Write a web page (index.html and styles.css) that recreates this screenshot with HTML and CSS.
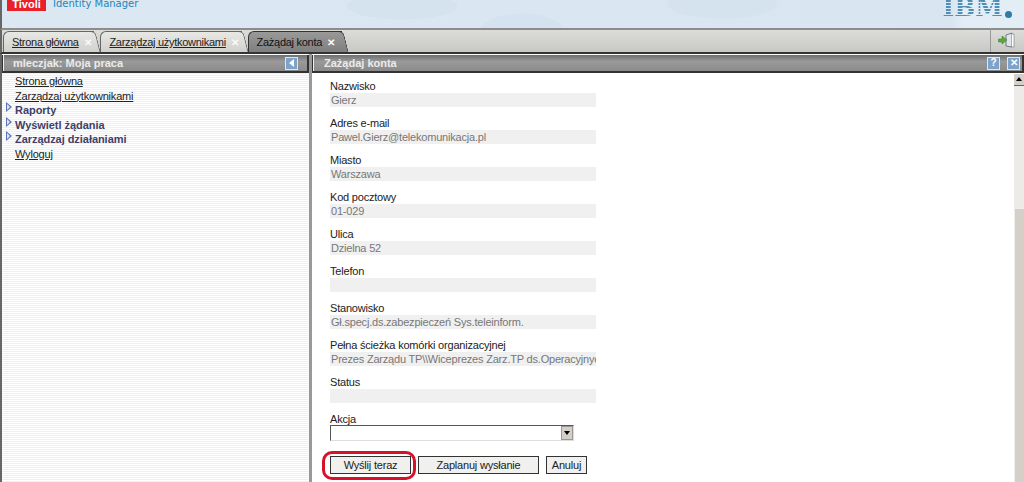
FILE: index.html
```html
<!DOCTYPE html>
<html lang="pl">
<head>
    <meta charset="UTF-8">
    <title>Tivoli Identity Manager</title>
    <link rel="stylesheet" href="styles.css">
</head>
<body>
    <div class="banner">
        <div class="brand">
            <span class="tivoli">Tivoli</span>
            <span class="product">Identity Manager</span>
        </div>
        <div class="ibm">IBM<span class="ibm-dot"></span></div>
    </div>

    <div class="tabbar">
        <div class="tab"><span class="tab-link">Strona główna</span><span class="tab-x">✕</span></div>
        <div class="tab"><span class="tab-link">Zarządzaj użytkownikami</span><span class="tab-x">✕</span></div>
        <div class="tab active"><span>Zażądaj konta</span><span class="tab-x">✕</span></div>
        <div class="logout-box">
            <svg width="17" height="17" viewBox="0 0 17 17">
                <path d="M8 3 L14 1 V15 L8 14 Z" fill="#dfe5ea" stroke="#56646c" stroke-width="0.8"/>
                <path d="M14 2 H16 V15 H14" fill="#fff" stroke="#8a949a" stroke-width="0.8"/>
                <path d="M0.5 7 H4 V4 L9 8 L4 12 V10 H0.5 Z" fill="#5aa83c" stroke="#3c7a28" stroke-width="0.5"/>
            </svg>
        </div>
    </div>

    <div class="workspace">
        <aside class="sidebar">
            <div class="panel-head">
                <span>mleczjak: Moja praca</span>
                <span class="head-btn">
                    <svg width="10" height="10" viewBox="0 0 10 10"><path d="M7 1 V9 L2 5 Z" fill="#fff"/></svg>
                </span>
            </div>
            <ul class="nav">
                <li><a class="nav-link">Strona główna</a></li>
                <li><a class="nav-link">Zarządzaj użytkownikami</a></li>
                <li class="group">Raporty</li>
                <li class="group">Wyświetl żądania</li>
                <li class="group">Zarządzaj działaniami</li>
                <li><a class="nav-link">Wyloguj</a></li>
            </ul>
        </aside>

        <main class="main">
            <div class="panel-head main-head">
                <span>Zażądaj konta</span>
                <span class="head-btns">
                    <span class="head-btn">?</span>
                    <span class="head-btn">✕</span>
                </span>
            </div>
            <div class="main-body">
                <div class="form">
                    <div class="field"><label>Nazwisko</label><div class="value">Gierz</div></div>
                    <div class="field"><label>Adres e-mail</label><div class="value">Pawel.Gierz@telekomunikacja.pl</div></div>
                    <div class="field"><label>Miasto</label><div class="value">Warszawa</div></div>
                    <div class="field"><label>Kod pocztowy</label><div class="value">01-029</div></div>
                    <div class="field"><label>Ulica</label><div class="value">Dzielna 52</div></div>
                    <div class="field"><label>Telefon</label><div class="value"></div></div>
                    <div class="field"><label>Stanowisko</label><div class="value">Gł.specj.ds.zabezpieczeń Sys.teleinform.</div></div>
                    <div class="field"><label>Pełna ścieżka komórki organizacyjnej</label><div class="value">Prezes Zarządu TP\\Wiceprezes Zarz.TP ds.Operacyjnych</div></div>
                    <div class="field"><label>Status</label><div class="value"></div></div>
                    <div class="field action">
                        <label>Akcja</label>
                        <div class="select"><span class="select-arrow"></span></div>
                    </div>
                    <div class="buttons">
                        <button class="btn send">Wyślij teraz</button>
                        <button class="btn plan">Zaplanuj wysłanie</button>
                        <button class="btn cancel">Anuluj</button>
                    </div>
                </div>
                <div class="scrollbar">
                    <div class="scroll-up"></div>
                    <div class="scroll-track"></div>
                    <div class="scroll-thumb"></div>
                </div>
            </div>
        </main>
    </div>
</body>
</html>
```

FILE: styles.css
```css
* {
    margin: 0;
    padding: 0;
    box-sizing: border-box;
}
html, body {
    height: 482px;
    overflow: hidden;
}
body {
    display: flex;
    flex-direction: column;
    background: #fff;
    color: #222;
    font-family: "Liberation Sans", Arial, sans-serif;
    font-size: 11px;
    letter-spacing: -0.2px;
}

/* top banner, cut off by the screenshot */
.banner {
    height: 30px;
    flex: none;
    display: flex;
    justify-content: space-between;
    overflow: hidden;
    background:
        radial-gradient(ellipse 90px 22px at 400px 6px, #d5e3ef 60%, transparent 62%),
        radial-gradient(ellipse 70px 30px at 520px 32px, #d4e3ef 60%, transparent 62%),
        radial-gradient(ellipse 90px 24px at 720px 4px, #d5e3ef 60%, transparent 62%),
        linear-gradient(90deg, #dbe7f1, #d9e6f1 93%, #e2edf5 94%);
    border-left: 2px solid #666;
    border-bottom: 2px solid #8c8c8c;
}
.brand {
    display: flex;
    align-items: flex-start;
    gap: 7px;
    padding-left: 5px;
    letter-spacing: 0;
}
.tivoli {
    width: 39px;
    height: 11px;
    background: #e8202a;
    color: #fff;
    font-weight: bold;
    font-size: 11px;
    line-height: 8px;
    text-align: center;
}
.product {
    color: #1f86b8;
    font-family: "DejaVu Sans", sans-serif;
    font-size: 10px;
    line-height: 8px;
    letter-spacing: 0;
}
.ibm {
    display: flex;
    align-items: flex-start;
    height: 27px;
    margin: -6px 12px 0 0;
    font-family: "DejaVu Serif", serif;
    font-size: 25px;
    line-height: 27px;
    font-weight: bold;
    letter-spacing: 0;
    color: transparent;
    background: repeating-linear-gradient(#4d8fb5 0 2px, transparent 2px 3px);
    -webkit-background-clip: text;
    background-clip: text;
}
.ibm-dot {
    width: 7px;
    height: 7px;
    margin: 17px 0 0 2px;
    border-radius: 50%;
    background: #2f7ba8;
}

/* tabs */
.tabbar {
    height: 24px;
    flex: none;
    display: flex;
    align-items: flex-end;
    gap: 6px;
    padding-left: 1px;
    background: linear-gradient(#dcdcd8, #c8c8c4);
    border-left: 2px solid #666;
    border-bottom: 2px solid #333;
}
.tab {
    position: relative;
    height: 21px;
    display: flex;
    align-items: center;
    gap: 5px;
    padding: 0 3px 0 8px;
    background: linear-gradient(#e8e8e4, #d0d0cc);
    border: 1px solid #666;
    border-width: 1px 0 0 1px;
    border-radius: 6px 0 0 0;
    font-size: 11px;
    letter-spacing: -0.28px;
    color: #222;
}
/* slanted right side of a tab */
.tab::after {
    content: "";
    position: absolute;
    top: -1px;
    bottom: 0;
    right: -4px;
    width: 8px;
    background: inherit;
    border: 1px solid #666;
    border-width: 1px 1px 0 0;
    border-radius: 0 5px 0 0;
    transform: skewX(14deg);
}
.tab-link {
    text-decoration: underline;
}
.tab-x {
    position: relative;
    z-index: 1;
    color: #fafafa;
    font-size: 10px;
    font-weight: bold;
}
.tab.active {
    padding-right: 7px;
    background: linear-gradient(#999, #7f7f7f);
    border-color: #333;
    color: #111;
}
.tab.active::after {
    border-color: #333;
}
.logout-box {
    height: 24px;
    margin-left: auto;
    width: 34px;
    display: flex;
    align-items: center;
    padding-left: 7px;
    border-left: 1px solid #999;
}

/* two panels */
.workspace {
    flex: 1;
    display: flex;
    min-height: 0;
}
.sidebar {
    width: 309px;
    flex: none;
    border-left: 2px solid #666;
    background: repeating-linear-gradient(#fff 0 1px, #eef1f1 1px 2px);
}
.panel-head {
    height: 18px;
    margin-top: 1px;
    display: flex;
    align-items: center;
    justify-content: space-between;
    padding: 0 9px 0 10px;
    background: linear-gradient(#6e6e6e, #9a9a9a 40%, #8a8a8a);
    border: 1px solid #333;
    border-width: 0 2px 2px 1px;
    box-shadow: inset 1px 0 #eee;
    color: #ebebeb;
    font-size: 11px;
    font-weight: bold;
    letter-spacing: 0;
}
.head-btn {
    width: 13px;
    height: 13px;
    display: flex;
    align-items: center;
    justify-content: center;
    background: #7ea3cb;
    border: 1px solid #dce6f0;
    color: #fff;
    font-size: 10px;
    font-weight: bold;
    line-height: 1;
}
.head-btns {
    display: flex;
    gap: 7px;
    margin-right: -7px;
}
.nav {
    list-style: none;
    padding: 1px 0 0 13px;
}
.nav li {
    height: 14.6px;
    line-height: 14px;
    font-size: 11px;
    white-space: nowrap;
}
.nav-link {
    color: #222;
    text-decoration: underline;
}
.nav .group {
    position: relative;
    color: #3f3f68;
    font-weight: bold;
    letter-spacing: -0.05px;
}
/* small outlined arrow in front of a group */
.nav .group::before,
.nav .group::after {
    content: "";
    position: absolute;
    top: -1px;
    left: -9px;
    border-left: 6px solid #5a74b8;
    border-top: 5px solid transparent;
    border-bottom: 5px solid transparent;
}
.nav .group::after {
    top: 1px;
    left: -8px;
    border-left: 3px solid #dfe5f3;
    border-top-width: 3px;
    border-bottom-width: 3px;
}

.main {
    flex: 1;
    min-width: 0;
    display: flex;
    flex-direction: column;
    border-left: 3px solid #999;
}
.main-head {
    padding-left: 11px;
}
.main-body {
    flex: 1;
    min-height: 0;
    display: flex;
    justify-content: space-between;
}

/* form */
.form {
    width: 274px;
    margin-left: 18px;
    padding-top: 6px;
    flex: none;
}
.field {
    height: 37px;
    white-space: nowrap;
}
.field label {
    display: block;
    height: 14px;
    line-height: 14px;
    font-size: 11px;
    color: #222;
}
.value {
    width: 266px;
    height: 14px;
    line-height: 14px;
    padding-left: 1px;
    overflow: hidden;
    background: #f0f0f0;
    color: #777;
    font-size: 11px;
}
.action {
    height: 44px;
}
.action label {
    height: 13px;
}
.select {
    width: 244px;
    height: 16px;
    display: flex;
    justify-content: flex-end;
    border: 1px solid;
    border-color: #555 #ddd #ddd #555;
    background: #fff;
}
.select-arrow {
    width: 12px;
    height: 14px;
    display: flex;
    align-items: center;
    justify-content: center;
    background: #d4d0c8;
    border: 1px solid #999;
}
.select-arrow::after {
    content: "";
    border-top: 4px solid #000;
    border-left: 3px solid transparent;
    border-right: 3px solid transparent;
}
.buttons {
    display: flex;
    gap: 7px;
}
.btn {
    height: 18px;
    padding: 0;
    background: #f0f0ee;
    border: 1px solid #333;
    font-family: inherit;
    font-size: 11px;
    letter-spacing: -0.2px;
    color: #222;
}
.send {
    position: relative;
    width: 81px;
}
/* red marker drawn round the first button */
.send::after {
    content: "";
    position: absolute;
    left: -9px;
    right: -6px;
    top: -6px;
    bottom: -7px;
    border: 3px solid #d8102c;
    border-radius: 10px;
}
.plan {
    width: 121px;
}
.cancel {
    width: 41px;
}

.scrollbar {
    width: 10px;
    flex: none;
    display: flex;
    flex-direction: column;
    margin-top: 1px;
}
.scroll-up {
    height: 12px;
    display: flex;
    justify-content: center;
    padding-top: 3px;
    background: #d4d0c8;
    border-bottom: 1px solid #666;
}
.scroll-up::after {
    content: "";
    height: 0;
    border-bottom: 4px solid #000;
    border-left: 3px solid transparent;
    border-right: 3px solid transparent;
}
.scroll-track {
    height: 122px;
    background: #edebe7;
}
.scroll-thumb {
    flex: 1;
    background: #d4d0c8;
    border-left: 1px solid #eee;
    border-top: 1px solid #eee;
}
```
